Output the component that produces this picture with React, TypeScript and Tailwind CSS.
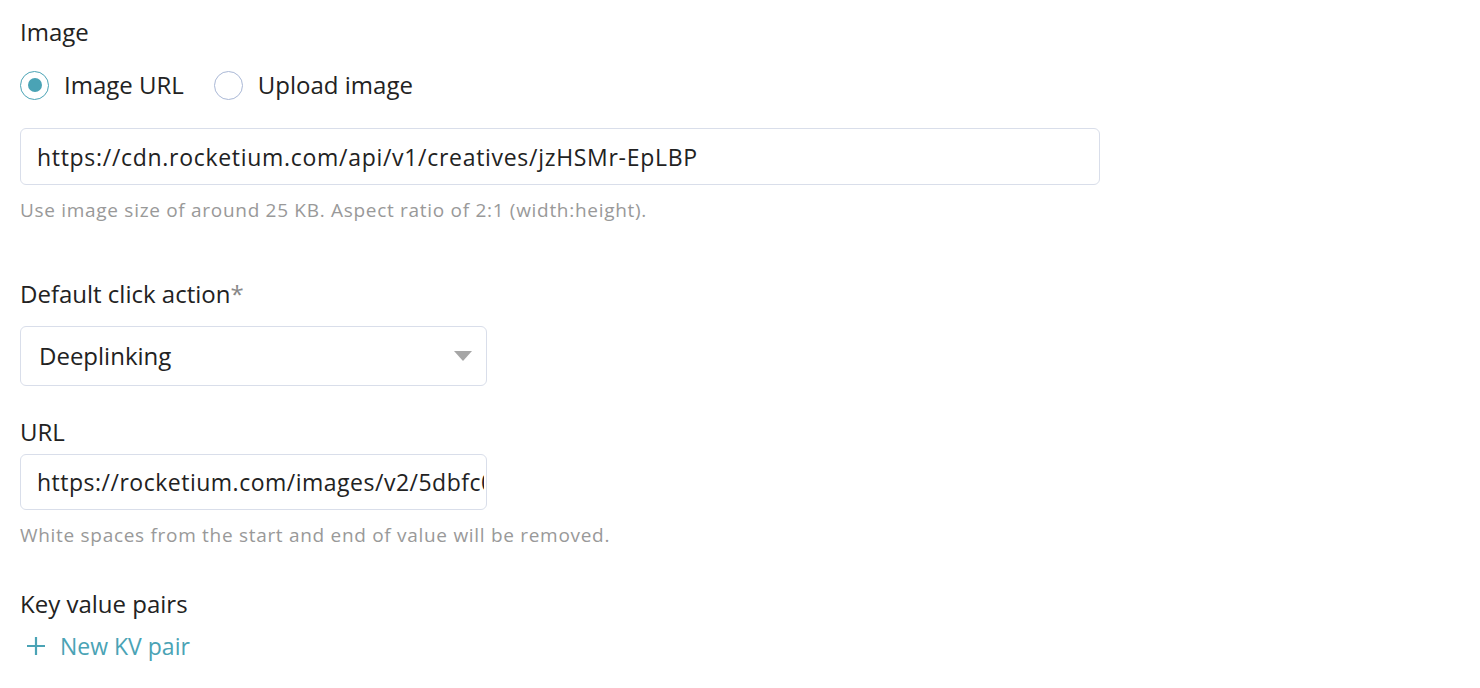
import { useState } from 'react'

export default function App() {
  const [source, setSource] = useState<'url' | 'upload'>('url')

  return (
    <div className="min-h-screen bg-white pl-5 pt-4 text-[#222] font-['Open_Sans',sans-serif]">
      {/* Image */}
      <div className="text-[24px] leading-8">Image</div>
      <div className="mt-[22px] flex h-[30px] items-center">
        <label className="flex cursor-pointer items-center" onClick={() => setSource('url')}>
          <span
            className={`flex h-[29px] w-[29px] items-center justify-center rounded-full border ${
              source === 'url' ? 'border-[#4aa3b5]' : 'border-[#aab8d6]'
            }`}
          >
            {source === 'url' && <span className="h-[14px] w-[14px] rounded-full bg-[#4aa3b5]" />}
          </span>
          <span className="ml-[15px] text-[24px]">Image URL</span>
        </label>
        <label className="ml-[30px] flex cursor-pointer items-center" onClick={() => setSource('upload')}>
          <span
            className={`flex h-[29px] w-[29px] items-center justify-center rounded-full border ${
              source === 'upload' ? 'border-[#4aa3b5]' : 'border-[#aab8d6]'
            }`}
          >
            {source === 'upload' && <span className="h-[14px] w-[14px] rounded-full bg-[#4aa3b5]" />}
          </span>
          <span className="ml-[15px] text-[24px]">Upload image</span>
        </label>
      </div>

      <input
        className="mt-[28px] block h-[57px] w-[1080px] rounded-md border border-[#d9deea] px-4 text-[23px] tracking-[0.7px] text-[#222] outline-none"
        defaultValue="https://cdn.rocketium.com/api/v1/creatives/jzHSMr-EpLBP"
      />
      <div className="mt-[13px] text-[19px] leading-6 tracking-[0.7px] text-[#999]">
        Use image size of around 25 KB. Aspect ratio of 2:1 (width:height).
      </div>

      {/* Click action */}
      <div className="mt-[56px] text-[24px] leading-8">
        Default click action<span className="text-[#888]">*</span>
      </div>
      <div className="mt-4 flex h-[60px] w-[467px] items-center justify-between rounded-md border border-[#d9deea] pl-[18px] pr-[14px]">
        <span className="text-[24px]">Deeplinking</span>
        <svg width="18" height="10" viewBox="0 0 18 10">
          <path d="M0 0h18L9 10z" fill="#a6a6a6" />
        </svg>
      </div>

      <div className="mt-[30px] text-[24px] leading-8">URL</div>
      <input
        className="mt-[6px] block h-[56px] w-[467px] rounded-md border border-[#d9deea] pl-4 pr-[2px] text-[23px] tracking-[0.5px] text-[#222] outline-none"
        defaultValue="https://rocketium.com/images/v2/5dbfc0d2c6a2b8001e3c1f9a"
      />
      <div className="mt-[13px] text-[19px] leading-6 tracking-[0.7px] text-[#999]">
        White spaces from the start and end of value will be removed.
      </div>

      {/* KV pairs */}
      <div className="mt-[41px] text-[24px] leading-8">Key value pairs</div>
      <button className="mt-[10px] flex h-8 items-center text-[23px] text-[#4aa3b5]">
        <svg width="20" height="20" viewBox="0 0 20 20" className="ml-[6px]">
          <path d="M10 1v18M1 10h18" stroke="#4aa3b5" strokeWidth="2.2" />
        </svg>
        <span className="ml-[14px]">New KV pair</span>
      </button>
    </div>
  )
}
